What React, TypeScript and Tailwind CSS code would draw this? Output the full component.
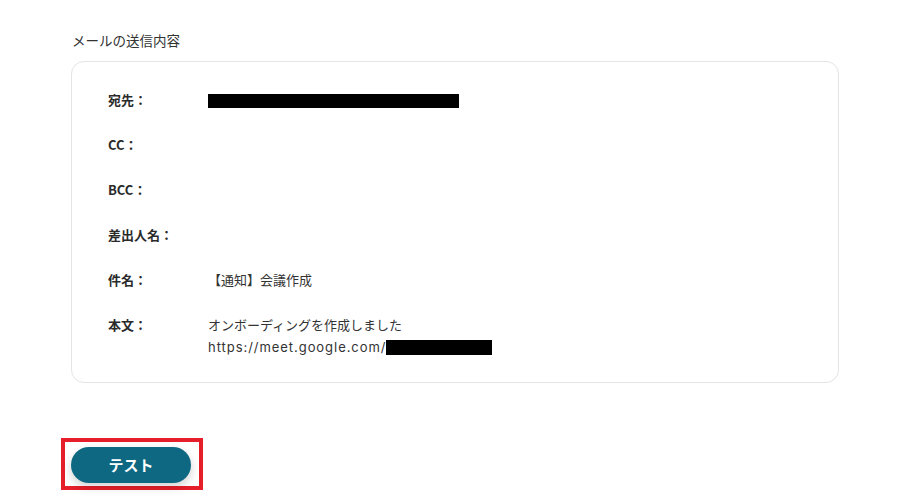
import React from 'react';

const rows: { label: string; value?: React.ReactNode }[] = [
  { label: '宛先：', value: <span className="inline-block w-[251px] h-[14px] bg-black align-middle" /> },
  { label: 'CC：' },
  { label: 'BCC：' },
  { label: '差出人名：' },
  { label: '件名：', value: '【通知】会議作成' },
  {
    label: '本文：',
    value: (
      <>
        <div>オンボーディングを作成しました</div>
        <div className="flex items-center">
          <span className="font-['Inter'] tracking-[0.95px]">https://meet.google.com/</span>
          <span className="inline-block w-[106px] h-[15px] bg-black" />
        </div>
      </>
    ),
  },
];

const App = () => {
  return (
    <div
      className="w-[913px] h-[504px] bg-white overflow-hidden text-[#333]"
      style={{ fontFamily: '"Noto Sans CJK JP", "Noto Sans", sans-serif' }}
    >
      <div className="pl-[71px] pt-[30px]">
        <p className="text-[13.5px] leading-[20px] pl-[1px] text-[#333]">メールの送信内容</p>
        <div className="mt-[11px] w-[768px] border border-[#e4e4e4] rounded-[13px] pl-[36px] pt-[27px] pb-[24px]">
          <div className="flex flex-col gap-[23px]">
            {rows.map((row) => (
              <div key={row.label} className="flex text-[13px] leading-[22px]">
                <div className="w-[100px] font-bold shrink-0 text-[#2a2a2a]">{row.label}</div>
                <div className="text-[#333]">{row.value}</div>
              </div>
            ))}
          </div>
        </div>
      </div>

      <div className="ml-[61px] mt-[55px] w-[142px] h-[52px] border-[4px] border-[#e61e2a] pl-[6px] pt-[5px]">
        <button className="w-[120px] h-[36px] rounded-full bg-[#0e6881] text-white text-[15px] font-bold shadow-[0_4px_10px_rgba(0,0,0,0.18)]">
          テスト
        </button>
      </div>
    </div>
  );
};

export default App;
